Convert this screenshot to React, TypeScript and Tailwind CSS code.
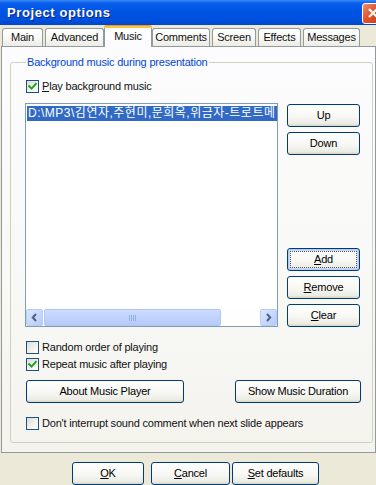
import React from "react";

function Check({ checked }: { checked?: boolean }) {
  return (
    <span className="w-[13px] h-[13px] shrink-0 border border-[#1c5180] bg-[linear-gradient(135deg,#dcdcd7_0%,#f3f3ef_60%,#ffffff_100%)] flex items-center justify-center">
      {checked && (
        <svg width="9" height="9" viewBox="0 0 9 9">
          <path d="M1.2 4.2 L3.6 6.6 L7.8 1.8" stroke="#21a121" strokeWidth="2" fill="none" strokeLinecap="square" />
        </svg>
      )}
    </span>
  );
}

function CheckRow({ checked, children, cls }: { checked?: boolean; children: React.ReactNode; cls: string }) {
  return (
    <div className={"flex items-center h-[13px] gap-[3px] " + cls}>
      <Check checked={checked} />
      <span className="leading-[13px] whitespace-nowrap">{children}</span>
    </div>
  );
}

function Btn({ children, cls, focused }: { children: React.ReactNode; cls: string; focused?: boolean }) {
  return (
    <div
      className={
        "h-[23px] border border-[#003c74] rounded-[3px] bg-[linear-gradient(180deg,#ffffff_0%,#f6f6f2_60%,#ecebe4_88%,#d8d4c8_100%)] flex items-center justify-center text-black " +
        (focused ? "shadow-[inset_0_0_0_1px_#b5c9f5,inset_0_0_0_2px_#cad9f9] p-[2px] " : "") +
        cls
      }
    >
      {focused ? (
        <div className="w-full h-full border border-dotted border-[#555] flex items-center justify-center">{children}</div>
      ) : (
        children
      )}
    </div>
  );
}

function Arrow({ dir }: { dir: "l" | "r" }) {
  return (
    <div className="w-[17px] h-[17px] shrink-0 border border-[#b8cdf6] rounded-[2px] bg-[linear-gradient(135deg,#dbe6fe_0%,#c4d6fd_60%,#b4c9f5_100%)] flex items-center justify-center">
      <svg width="7" height="9" viewBox="0 0 7 9">
        {dir === "l" ? (
          <path d="M5 1 L1.8 4.5 L5 8" stroke="#4d6185" strokeWidth="2" fill="none" />
        ) : (
          <path d="M2 1 L5.2 4.5 L2 8" stroke="#4d6185" strokeWidth="2" fill="none" />
        )}
      </svg>
    </div>
  );
}

const U = ({ c }: { c: string }) => <span className="underline underline-offset-[1px]">{c}</span>;

function Tab({ label, w, active }: { label: string; w: string; active?: boolean }) {
  if (active) {
    return (
      <div
        className={
          "relative z-10 h-[22px] -mb-[1px] -mx-[2px] border border-b-0 border-[#919b9c] border-t-0 rounded-t-[3px] bg-[#fcfcfe] flex flex-col " +
          w
        }
      >
        <div className="h-[3px] rounded-t-[3px] bg-[linear-gradient(180deg,#e68b2c_0%,#ffc73c_60%,#ffc73c_100%)] -mx-[1px]" />
        <div className="flex-1 flex items-center justify-center pb-[2px]">{label}</div>
      </div>
    );
  }
  return (
    <div
      className={
        "h-[18px] border border-b-0 border-[#919b9c] rounded-t-[3px] bg-[linear-gradient(180deg,#ffffff_0%,#f9f9f6_50%,#ecebe5_100%)] flex items-center justify-center " +
        w
      }
    >
      {label}
    </div>
  );
}

export default function App() {
  return (
    <div className="w-[376px] h-[485px] overflow-hidden bg-[#ece9d8] flex flex-col text-[11px] tracking-[-0.2px] text-[#111] font-['Liberation_Sans',Arial,'Noto_Sans_CJK_KR',sans-serif]">
      {/* title bar */}
      <div className="h-[25px] shrink-0 flex items-center bg-[linear-gradient(180deg,#3d8bf7_0%,#0a5fee_12%,#0055e5_40%,#0050dd_80%,#0046cf_100%)] pl-[7px]">
        <span className="text-white font-bold text-[13px] [text-shadow:1px_1px_0_#0a1e8c] tracking-[0.6px]">Project options</span>
        <div className="ml-auto -mr-[8px] mt-[1px] w-[22px] h-[21px] rounded-[3px] border border-white bg-[linear-gradient(135deg,#f08f6e_0%,#e0532c_45%,#c63d19_100%)] flex items-center justify-center">
          <svg width="12" height="12" viewBox="0 0 12 12">
            <path d="M2 2 L10 10 M10 2 L2 10" stroke="white" strokeWidth="2.2" />
          </svg>
        </div>
      </div>

      {/* tabs */}
      <div className="h-[21px] shrink-0 flex items-end pl-[2px] gap-[2px]">
        <Tab label="Main" w="w-[41px]" />
        <Tab label="Advanced" w="w-[59px]" />
        <Tab label="Music" w="w-[48px]" active />
        <Tab label="Comments" w="w-[58px]" />
        <Tab label="Screen" w="w-[44px]" />
        <Tab label="Effects" w="w-[43px]" />
        <Tab label="Messages" w="w-[57px]" />
      </div>

      {/* panel */}
      <div className="ml-[1px] w-[375px] h-[407px] shrink-0 border border-[#919b9c] bg-[linear-gradient(180deg,#fcfcfe_0%,#f8f8f5_60%,#f4f3ee_100%)] flex flex-col">
        <fieldset className="mt-[9px] ml-[8px] w-[363px] border border-[#d0d0bf] rounded-[3px] pl-[15px] pr-[11px] pb-[12px] flex flex-col">
          <legend className="px-[1px] text-[#0046d5] leading-[13px]">Background music during presentation</legend>
          <CheckRow checked cls="mt-[11px]">
            <U c="P" />lay background music
          </CheckRow>

          <div className="mt-[10px] flex gap-[9px]">
            <div className="-ml-[1px] w-[253px] h-[224px] border border-[#7f9db9] bg-white flex flex-col">
              <div className="flex-1 pt-[1px] pl-[1px] overflow-hidden">
                <div className="inline-block bg-[#316ac5] text-white pl-[1px] pr-[2px] h-[15px] leading-[15px] text-[12px] tracking-[0.5px] whitespace-nowrap">
                  D:\MP3\김연자,주현미,문희옥,위금자-트로트메
                </div>
              </div>
              <div className="h-[17px] flex bg-[#fefefe]">
                <Arrow dir="l" />
                <div className="ml-[1px] w-[177px] h-[17px] border border-[#b0c6f3] rounded-[2px] bg-[linear-gradient(180deg,#cddcfe_0%,#c0d3fc_50%,#b5caf7_100%)] flex items-center justify-center gap-[1px]">
                  <span className="w-[1px] h-[6px] bg-[#8fb0f0]" />
                  <span className="w-[1px] h-[6px] bg-[#8fb0f0]" />
                  <span className="w-[1px] h-[6px] bg-[#8fb0f0]" />
                  <span className="w-[1px] h-[6px] bg-[#8fb0f0]" />
                </div>
                <div className="flex-1" />
                <Arrow dir="r" />
              </div>
            </div>
            <div className="w-[73px] flex flex-col">
              <Btn cls="mt-[1px]">Up</Btn>
              <Btn cls="mt-[5px]">Down</Btn>
              <Btn cls="mt-auto" focused>
                <span>
                  <U c="A" />dd
                </span>
              </Btn>
              <Btn cls="mt-[5px]">
                <span>
                  <U c="R" />emove
                </span>
              </Btn>
              <Btn cls="mt-[5px]">
                <span>
                  <U c="C" />lear
                </span>
              </Btn>
            </div>
          </div>

          <CheckRow cls="mt-[14px]">Random order of playing</CheckRow>
          <CheckRow checked cls="mt-[4px]">
            Repeat music after playing
          </CheckRow>

          <div className="mt-[9px] flex justify-between">
            <Btn cls="w-[158px]">About Music Player</Btn>
            <Btn cls="w-[126px]">Show Music Duration</Btn>
          </div>

          <CheckRow cls="mt-[14px]">Don't interrupt sound comment when next slide appears</CheckRow>
        </fieldset>
      </div>

      {/* bottom buttons */}
      <div className="pt-[9px] pl-[72px] flex">
        <Btn cls="w-[72px]">
          <span>
            <U c="O" />K
          </span>
        </Btn>
        <Btn cls="ml-[7px] w-[79px]">
          <span>
            <U c="C" />ancel
          </span>
        </Btn>
        <Btn cls="ml-[2px] w-[87px]">
          <span>
            <U c="S" />et defaults
          </span>
        </Btn>
      </div>
    </div>
  );
}
